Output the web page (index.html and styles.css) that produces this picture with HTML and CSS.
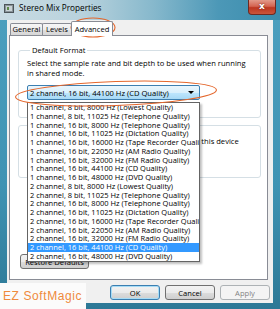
FILE: index.html
```html
<!DOCTYPE html>
<html lang="en">
<head>
    <meta charset="UTF-8">
    <title>Stereo Mix Properties</title>
    <link rel="stylesheet" href="styles.css">
</head>
<body>
    <div class="window">
        <div class="titlebar">
            <svg class="app-icon" width="10" height="9" viewBox="0 0 10 9">
                <rect x="0.5" y="0.5" width="9" height="8" fill="#8a9499" stroke="#4d5559"/>
                <rect x="2" y="2" width="6" height="5" fill="#c9d2d5"/>
                <rect x="3" y="3" width="2" height="3" fill="#5d8a4a"/>
            </svg>
            <span class="title">Stereo Mix Properties</span>
            <div class="close">x</div>
        </div>
        <div class="client">
            <div class="tabs">
                <div class="tab tab-general">General</div>
                <div class="tab tab-levels">Levels</div>
                <div class="tab tab-advanced active">Advanced</div>
            </div>
            <div class="panel">
                <fieldset class="group group-format">
                    <legend>Default Format</legend>
                    <p class="desc">Select the sample rate and bit depth to be used when running<br>in shared mode.</p>
                    <div class="combo">
                        <span>2 channel, 16 bit, 44100 Hz (CD Quality)</span>
                        <span class="arrow"></span>
                    </div>
                </fieldset>
                <fieldset class="group group-exclusive">
                    <legend>Exclusive Mode</legend>
                    <label class="check"><span class="box"></span>Allow applications to take exclusive control of this device</label>
                    <label class="check"><span class="box"></span>Give exclusive mode applications priority</label>
                </fieldset>
                <button class="btn btn-restore">Restore Defaults</button>
            </div>
            <div class="buttons">
                <button class="btn btn-default">OK</button>
                <button class="btn">Cancel</button>
                <button class="btn btn-disabled">Apply</button>
            </div>
        </div>

        <ul class="dropdown">
            <li>1 channel, 8 bit, 8000 Hz (Lowest Quality)</li>
            <li>1 channel, 8 bit, 11025 Hz (Telephone Quality)</li>
            <li>1 channel, 16 bit, 8000 Hz (Telephone Quality)</li>
            <li>1 channel, 16 bit, 11025 Hz (Dictation Quality)</li>
            <li>1 channel, 16 bit, 16000 Hz (Tape Recorder Quality)</li>
            <li>1 channel, 16 bit, 22050 Hz (AM Radio Quality)</li>
            <li>1 channel, 16 bit, 32000 Hz (FM Radio Quality)</li>
            <li>1 channel, 16 bit, 44100 Hz (CD Quality)</li>
            <li>1 channel, 16 bit, 48000 Hz (DVD Quality)</li>
            <li>2 channel, 8 bit, 8000 Hz (Lowest Quality)</li>
            <li>2 channel, 8 bit, 11025 Hz (Telephone Quality)</li>
            <li>2 channel, 16 bit, 8000 Hz (Telephone Quality)</li>
            <li>2 channel, 16 bit, 11025 Hz (Dictation Quality)</li>
            <li>2 channel, 16 bit, 16000 Hz (Tape Recorder Quality)</li>
            <li>2 channel, 16 bit, 22050 Hz (AM Radio Quality)</li>
            <li>2 channel, 16 bit, 32000 Hz (FM Radio Quality)</li>
            <li class="selected">2 channel, 16 bit, 44100 Hz (CD Quality)</li>
            <li>2 channel, 16 bit, 48000 Hz (DVD Quality)</li>
        </ul>

        <svg class="marks" width="280" height="309" viewBox="0 0 280 309">
            <ellipse cx="93" cy="27.5" rx="22" ry="9.5" fill="none" stroke="#e4672d" stroke-width="1.1"/>
            <ellipse cx="116" cy="93.5" rx="100.5" ry="12" fill="none" stroke="#e4672d" stroke-width="1.1" transform="rotate(-2 116 93.5)"/>
        </svg>

        <div class="watermark">EZ SoftMagic</div>
    </div>
</body>
</html>
```

FILE: styles.css
```css
:root {
    --frame-teal: #3f93b3;
    --frame-dark: #2c7896;
    --client-bg: #f0f0f0;
    --tab-border: #898c95;
    --group-border: #d5dfe5;
    --mark-orange: #e4672d;
}
* {
    box-sizing: border-box;
}
html, body {
    margin: 0;
}
body {
    width: 280px;
    height: 309px;
    overflow: hidden;
    font-family: 'Open Sans', 'Noto Sans', sans-serif;
    font-size: 7.6px;
    color: #000;
}
.window {
    position: relative;
    width: 280px;
    height: 309px;
    padding: 0 7px 6px;
    display: flex;
    flex-direction: column;
    background: linear-gradient(to bottom, #4da0bf, var(--frame-teal) 60%, var(--frame-dark));
}
.titlebar {
    height: 20px;
    margin: 0 -7px;
    padding: 3px 4px 0 4px;
    display: flex;
    align-items: flex-start;
    background: linear-gradient(to right, #c9dbe3 0%, #b8d2dd 30%, #86b8cc 55%, #4c98b7 78%, #3a8cad 100%);
}
.app-icon {
    margin-top: 1px;
    margin-right: 5px;
}
.title {
    font-size: 8.2px;
    line-height: 10px;
    color: #000;
}
.close {
    margin: -3px 0 0 auto;
    width: 28px;
    height: 15px;
    border: 1px solid #6e2a22;
    border-top: none;
    border-radius: 0 0 4px 4px;
    background: linear-gradient(to bottom, #e29a8a 0%, #d46451 45%, #bd3620 55%, #c9563c 100%);
    color: #fff;
    font-family: 'DejaVu Sans', sans-serif;
    font-weight: bold;
    font-size: 9px;
    line-height: 13px;
    text-align: center;
    text-shadow: 0 0 2px #5a1a10;
}
.client {
    flex: 1;
    background: var(--client-bg);
    display: flex;
    flex-direction: column;
    padding: 0 3px 3px 0;
}
.tabs {
    display: flex;
    align-items: flex-end;
    height: 16px;
    padding-left: 3px;
}
.tab {
    height: 13px;
    border: 1px solid var(--tab-border);
    border-bottom: none;
    border-radius: 2px 2px 0 0;
    background: linear-gradient(to bottom, #f6f6f6, #ececec 50%, #dedede 51%, #d5d5d5);
    line-height: 11px;
    text-align: center;
    margin-right: -1px;
}
.tab-general {
    width: 33px;
}
.tab-levels {
    width: 30px;
}
.tab-advanced {
    width: 42px;
}
.tab.active {
    height: 15px;
    background: #fff;
    position: relative;
    z-index: 1;
    line-height: 14px;
}
.panel {
    margin: -1px 0 0 2px;
    width: 259px;
    height: 245px;
    background: #fff;
    border: 1px solid var(--tab-border);
    display: flex;
    flex-direction: column;
}
.group {
    margin: 0 0 0 8px;
    width: 243px;
    padding: 0 8px;
    border: 1px solid var(--group-border);
    border-radius: 3px;
    min-width: 0;
}
.group legend {
    padding: 0 2px;
    margin-left: 3px;
    line-height: 10px;
    color: #000;
}
.group-format {
    margin-top: 9px;
    padding-bottom: 17px;
}
.desc {
    margin: 3px 0 0;
    line-height: 10px;
    white-space: nowrap;
}
.combo {
    margin-top: 7px;
    width: 173px;
    height: 15px;
    border: 1px solid #3c7fb1;
    border-radius: 2px;
    background: linear-gradient(to bottom, #eaf6fd 0%, #d9f0fc 50%, #bee6fd 51%, #a7d9f5 100%);
    display: flex;
    align-items: center;
    padding: 0 5px 0 2px;
    line-height: 12px;
}
.arrow {
    margin-left: auto;
    width: 0;
    height: 0;
    border-left: 3px solid transparent;
    border-right: 3px solid transparent;
    border-top: 3px solid #000;
}
.group-exclusive {
    margin-top: 2px;
    height: 58px;
    padding-top: 5px;
}
.check {
    display: flex;
    align-items: center;
    gap: 4px;
    line-height: 12px;
    white-space: nowrap;
}
.box {
    width: 8px;
    height: 8px;
    border: 1px solid #8f8f8f;
    background: linear-gradient(#e8e8e8, #fbfbfb);
}
.btn {
    height: 15px;
    padding: 0;
    border: 1px solid #707070;
    border-radius: 3px;
    background: linear-gradient(to bottom, #f2f2f2 0%, #ebebeb 50%, #dddddd 51%, #cfcfcf 100%);
    font-family: 'Open Sans', 'Noto Sans', sans-serif;
    font-size: 7.6px;
    line-height: 12px;
    color: #000;
}
.btn-restore {
    margin: auto 0 10px 10px;
    width: 69px;
}
.buttons {
    display: flex;
    justify-content: flex-end;
    gap: 5px;
    margin-top: 5px;
}
.buttons .btn {
    width: 50px;
}
.btn-default {
    border-color: #3c7fb1;
    box-shadow: inset 0 0 0 1px #a6dcf6;
}
.btn-disabled {
    border-color: #adb2b5;
    background: #f4f4f4;
    color: #838383;
}
.dropdown {
    position: absolute;
    left: 27px;
    top: 102px;
    width: 173px;
    margin: 0;
    padding: 0;
    list-style: none;
    background: #fff;
    border: 1px solid #646464;
    box-shadow: 2px 2px 2px rgba(0, 0, 0, 0.25);
    overflow: hidden;
    font-size: 7.5px;
}
.dropdown li {
    height: 8.75px;
    line-height: 8.75px;
    padding-left: 2px;
    white-space: nowrap;
}
.dropdown li.selected {
    background: #3399ff;
    color: #fff;
}
.marks {
    position: absolute;
    left: 0;
    top: 0;
    pointer-events: none;
}
.watermark {
    position: absolute;
    left: 0;
    top: 283px;
    width: 86px;
    height: 26px;
    background: #fbfbfb;
    padding: 7px 0 0 3px;
    font-family: 'Liberation Sans', Arial, sans-serif;
    font-size: 12px;
    line-height: 13px;
    letter-spacing: 0.6px;
    color: #ef8a3c;
}
```
